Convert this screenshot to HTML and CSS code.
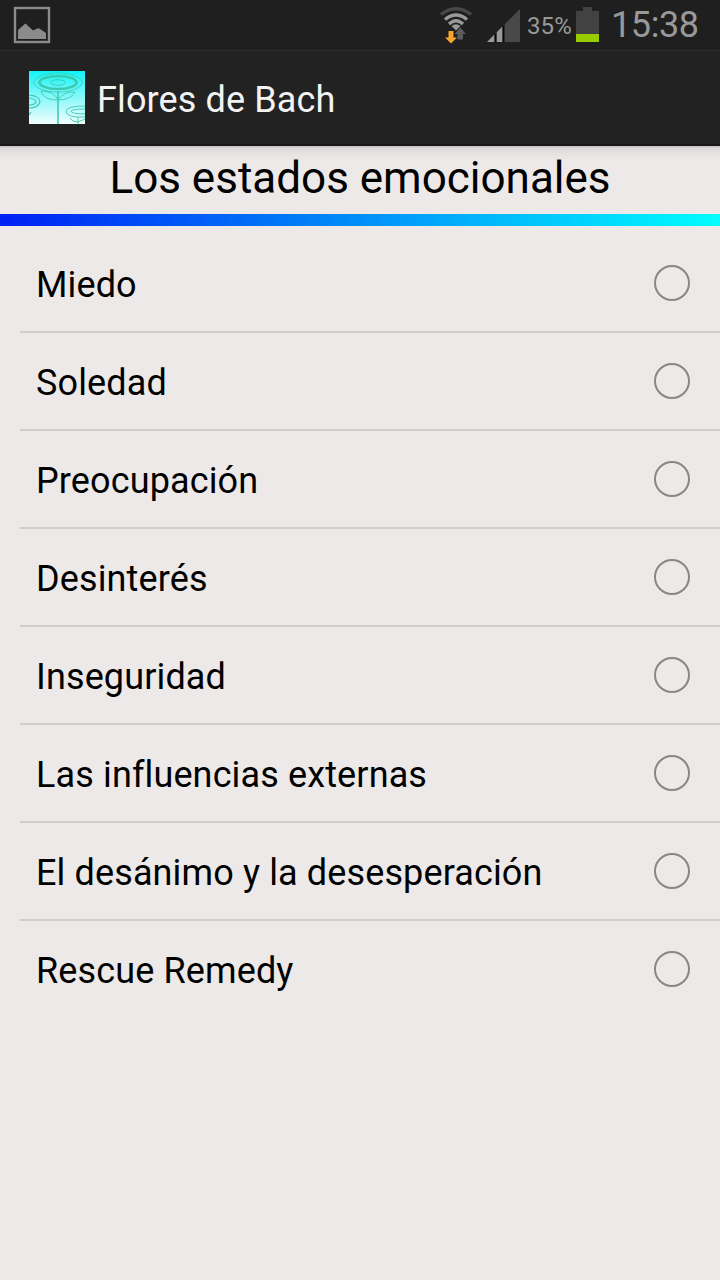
FILE: index.html
```html
<!DOCTYPE html>
<html lang="es">
<head>
<meta charset="utf-8">
<title>Flores de Bach</title>
<link rel="stylesheet" href="styles.css">
</head>
<body>
<div class="status-bar">
  <svg class="icon-picture" width="38" height="38" viewBox="0 0 38 38">
    <rect x="2" y="2" width="34" height="34" fill="none" stroke="#8b8b8b" stroke-width="2.400"/>
    <path d="M5 33V24L12.500 17.500L20 24.500L25.500 22L33 27V33Z" fill="#8b8b8b"/>
  </svg>
  <div class="status-right">
    <svg class="icon-wifi" width="34" height="38" viewBox="0 0 34 38">
      <g fill="none" stroke-width="3.400">
        <path d="M1 8.500Q16 -3 31 8.500" stroke="#484848"/>
        <path d="M5 13.500Q16 4.500 27 13.500" stroke="#999"/>
        <path d="M9 18Q16 11.500 23 18" stroke="#999"/>
      </g>
      <path d="M11.500 20Q16 16.500 20.500 20L16 24.500Z" fill="#999"/>
      <path d="M8.500 25H13.500V31.500H17L11 37.500L5 31.500H8.500Z" fill="#f9a52b"/>
      <path d="M17.500 33.500V28H14.500L20.300 21.500L26 28H23V33.500Z" fill="#5c5c5c"/>
    </svg>
    <svg class="icon-signal" width="33" height="33" viewBox="0 0 33 33">
      <path d="M0 33L33 0V33Z" fill="#494949"/>
      <path d="M0 33L7.500 25.500V33ZM9.500 33V23.500L15.500 17.500V33Z" fill="#999"/>
      <path d="M7.500 33V25.500L9.500 23.500V33ZM15.500 33V17.500L17.500 15.500V33Z" fill="#080808"/>
    </svg>
    <span class="percent">35%</span>
    <svg class="icon-battery" width="23" height="35" viewBox="0 0 23 35">
      <path d="M7 0H16V4H23V27H0V4H7Z" fill="#424242"/>
      <rect y="27" width="23" height="8" fill="#99cc00"/>
    </svg>
    <span class="clock">15:38</span>
  </div>
</div>
<header class="action-bar">
  <svg class="app-icon" width="56" height="53" viewBox="0 0 56 53">
    <defs>
      <linearGradient id="sky" x1="0" y1="0" x2="0" y2="1">
        <stop offset="0" stop-color="#10f4f8"/>
        <stop offset=".5" stop-color="#8af8fb"/>
        <stop offset="1" stop-color="#f2fdfd"/>
      </linearGradient>
    </defs>
    <rect width="56" height="53" fill="url(#sky)"/>
    <g fill="none" stroke="#3cc8ad">
      <ellipse cx="29" cy="11.500" rx="24" ry="9.500" stroke-width=".8"/>
      <ellipse cx="29" cy="11.500" rx="18.500" ry="6.500" stroke-width="2.500"/>
      <ellipse cx="29" cy="11.500" rx="7.500" ry="2.800" stroke-width=".9"/>
      <path d="M29 20V53" stroke-width="1.500"/>
      <path d="M29 29Q14 29 12 20Q25 20 29 29Q35 20 46 21Q42 29 29 29" stroke-width=".9"/>
      <path d="M0 24Q11 25 11 31Q9 37 0 37M0 27Q7 28 7 31Q6 34 0 34M0 44L2 41" stroke-width="1.200"/>
      <path d="M56 46Q37 47 37 40Q38 35 56 35M56 43Q42 43 42 40Q44 38 56 38M49 46V53M49 51Q43 51 41 47M49 51L56 48" stroke-width=".9"/>
    </g>
  </svg>
  <h1 class="app-title">Flores de Bach</h1>
</header>
<main class="content">
  <h2 class="heading">Los estados emocionales</h2>
  <div class="rule"></div>
  <ul class="list">
    <li class="item"><span class="label">Miedo</span><span class="radio"></span></li>
    <li class="item"><span class="label">Soledad</span><span class="radio"></span></li>
    <li class="item"><span class="label">Preocupación</span><span class="radio"></span></li>
    <li class="item"><span class="label">Desinterés</span><span class="radio"></span></li>
    <li class="item"><span class="label">Inseguridad</span><span class="radio"></span></li>
    <li class="item"><span class="label">Las influencias externas</span><span class="radio"></span></li>
    <li class="item"><span class="label">El desánimo y la desesperación</span><span class="radio"></span></li>
    <li class="item"><span class="label">Rescue Remedy</span><span class="radio"></span></li>
  </ul>
</main>
</body>
</html>
```

FILE: styles.css
```css
* { box-sizing: border-box; }
body {
  margin: 0;
  width: 720px;
  height: 1280px;
  overflow: hidden;
  display: flex;
  flex-direction: column;
  background: #ece9e8;
  font-family: Roboto, "Noto Sans", sans-serif;
  color: #000;
}
svg { display: block; flex: none; }
.status-bar {
  height: 50px;
  display: flex;
  justify-content: space-between;
  align-items: flex-start;
  padding: 6px 21px 0 13px;
  background: #1f1f1f;
  color: #999;
}
.status-right { display: flex; align-items: flex-start; }
.icon-wifi { margin-right: 13px; }
.icon-signal { margin: 3px 7px 0 0; }
.percent {
  width: 44px;
  margin: 6px 5px 0 0;
  font-size: 24px;
  line-height: 28px;
  letter-spacing: 0.1px;
  white-space: nowrap;
}
.icon-battery { margin: 1px 12px 0 0; }
.clock {
  width: 88px;
  margin-top: -2px;
  font-size: 36px;
  line-height: 42px;
  letter-spacing: -0.4px;
  white-space: nowrap;
}
.action-bar {
  height: 96px;
  display: flex;
  padding: 20px 0 0 29px;
  background: #222;
  border-top: 1px solid #2d2d2d;
  border-bottom: 2px solid #1b1718;
}
.app-title {
  margin: 8px 0 0 12px;
  font-size: 36px;
  line-height: 42px;
  font-weight: 400;
  color: #f3f3f3;
  letter-spacing: 0.13px;
}
.content {
  flex: 1;
  background: linear-gradient(#c2bfbe 0, #dad6d5 2px, #e5e2e1 7px, #ece9e8 15px);
}
.heading {
  height: 68px;
  margin: 0;
  padding-top: 6px;
  font-size: 44px;
  line-height: 52px;
  font-weight: 400;
  text-align: center;
}
.rule {
  height: 12px;
  background: linear-gradient(90deg, #0020f4, #00feff);
}
.list {
  margin: 0 0 0 20px;
  padding: 9px 0 0;
  list-style: none;
}
.item {
  height: 98px;
  display: flex;
  align-items: flex-start;
  justify-content: space-between;
  padding: 29px 30px 0 16px;
  border-bottom: 2px solid #d0cdcc;
}
.item:last-child { border-bottom: 0; }
.label {
  font-size: 36px;
  line-height: 42px;
  letter-spacing: 0.13px;
  white-space: nowrap;
}
.radio {
  width: 36px;
  height: 36px;
  margin-top: 1px;
  border: 2px solid #8a8686;
  border-radius: 50%;
}
```
